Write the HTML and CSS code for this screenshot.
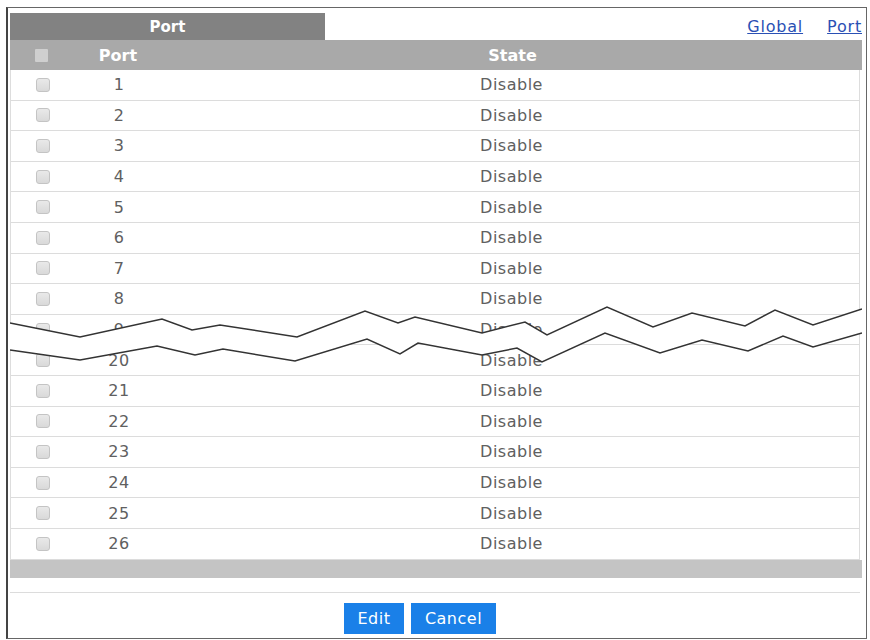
FILE: index.html
```html
<!DOCTYPE html>
<html lang="en">
<head>
  <meta charset="UTF-8" />
  <meta name="viewport" content="width=device-width, initial-scale=1.0" />
  <title>Port Settings</title>
  <link rel="stylesheet" href="styles.css">
</head>
<body>

  <section class="panel">
    <div class="panel-top">
      <div class="tab">Port</div>
      <nav class="links">
        <a href="#">Global</a>
        <a href="#">Port</a>
      </nav>
    </div>

    <div class="port-table">
      <div class="row head">
        <span class="cell"><span class="check all"></span></span>
        <span class="cell">Port</span>
        <span class="cell">State</span>
      </div>

      <div class="row"><span class="cell"><span class="check"></span></span><span class="cell">1</span><span class="cell">Disable</span></div>
      <div class="row"><span class="cell"><span class="check"></span></span><span class="cell">2</span><span class="cell">Disable</span></div>
      <div class="row"><span class="cell"><span class="check"></span></span><span class="cell">3</span><span class="cell">Disable</span></div>
      <div class="row"><span class="cell"><span class="check"></span></span><span class="cell">4</span><span class="cell">Disable</span></div>
      <div class="row"><span class="cell"><span class="check"></span></span><span class="cell">5</span><span class="cell">Disable</span></div>
      <div class="row"><span class="cell"><span class="check"></span></span><span class="cell">6</span><span class="cell">Disable</span></div>
      <div class="row"><span class="cell"><span class="check"></span></span><span class="cell">7</span><span class="cell">Disable</span></div>
      <div class="row"><span class="cell"><span class="check"></span></span><span class="cell">8</span><span class="cell">Disable</span></div>
      <div class="row"><span class="cell"><span class="check"></span></span><span class="cell">9</span><span class="cell">Disable</span></div>
      <div class="row"><span class="cell"><span class="check"></span></span><span class="cell">20</span><span class="cell">Disable</span></div>
      <div class="row"><span class="cell"><span class="check"></span></span><span class="cell">21</span><span class="cell">Disable</span></div>
      <div class="row"><span class="cell"><span class="check"></span></span><span class="cell">22</span><span class="cell">Disable</span></div>
      <div class="row"><span class="cell"><span class="check"></span></span><span class="cell">23</span><span class="cell">Disable</span></div>
      <div class="row"><span class="cell"><span class="check"></span></span><span class="cell">24</span><span class="cell">Disable</span></div>
      <div class="row"><span class="cell"><span class="check"></span></span><span class="cell">25</span><span class="cell">Disable</span></div>
      <div class="row"><span class="cell"><span class="check"></span></span><span class="cell">26</span><span class="cell">Disable</span></div>

      <!-- zig-zag break between port 9 and port 20 -->
      <svg class="cut" viewBox="10 300 852 70" width="852" height="70">
        <polygon fill="#fff" points="10,323 80,337 162,319 192,330 220,325 297,337 365,311 398,323 415,317 482,333 525,322 547,335 607,307 653,327 692,313 745,326 775,310 813,325 862,309 862,333 813,347 783,336 748,351 702,340 660,353 605,333 542,362 517,348 482,355 418,343 400,354 367,339 295,361 223,349 195,355 157,346 80,360 10,350" />
        <polyline fill="none" stroke="#333" stroke-width="1.5" points="10,323 80,337 162,319 192,330 220,325 297,337 365,311 398,323 415,317 482,333 525,322 547,335 607,307 653,327 692,313 745,326 775,310 813,325 862,309" />
        <polyline fill="none" stroke="#333" stroke-width="1.5" points="10,350 80,360 157,346 195,355 223,349 295,361 367,339 400,354 418,343 482,355 517,348 542,362 605,333 660,353 702,340 748,351 783,336 813,347 862,333" />
      </svg>
    </div>

    <div class="table-foot"></div>

    <div class="actions">
      <button class="btn edit">Edit</button>
      <button class="btn cancel">Cancel</button>
    </div>
  </section>

</body>
</html>
```

FILE: styles.css
```css
* {
  box-sizing: border-box;
  font-family: "DejaVu Sans", "Liberation Sans", sans-serif;
}

body {
  margin: 0;
  background: #fff;
  color: #606060;
}

.panel {
  width: 861px;
  height: 632px;
  margin: 7px 0 0 6px;
  padding: 0 4px 4px 2px;
  border: 1px solid #666;
  border-left: 2px solid #444;
  display: flex;
  flex-direction: column;
}

.panel-top {
  display: flex;
  justify-content: space-between;
  align-items: center;
  margin-top: 5px;
  height: 27px;
}

.tab {
  width: 315px;
  height: 27px;
  background: #828282;
  color: #fff;
  font-weight: bold;
  font-size: 15px;
  display: flex;
  align-items: center;
  justify-content: center;
}

.links {
  display: flex;
  gap: 24px;
}

.links a {
  color: #2a50b4;
  font-size: 16px;
  letter-spacing: 0.8px;
  text-decoration: underline;
}

.port-table {
  position: relative;
  border-left: 1px solid #ddd;
  border-right: 1px solid #ddd;
  margin-right: 2px;
}

.row {
  display: grid;
  grid-template-columns: 63px 90px 1fr;
  height: 30.6px;
  border-bottom: 1px solid #dcdcdc;
  align-items: center;
  font-size: 16px;
  letter-spacing: 0.5px;
}

.row .cell {
  text-align: center;
  display: flex;
  justify-content: center;
}

.row.head {
  height: 30px;
  background: #a9a9a9;
  color: #fff;
  font-weight: bold;
  border-bottom: none;
  margin: 0 -3px 0 -1px;
  letter-spacing: 0;
}

.check {
  display: block;
  width: 14px;
  height: 14px;
  border: 1px solid #c4c4c4;
  border-radius: 3px;
  background: linear-gradient(#e9e9e9, #d9d9d9);
}

.check.all {
  width: 13px;
  height: 13px;
  border: none;
  border-radius: 1px;
  background: #cfcfcf;
}

.cut {
  position: absolute;
  top: 260px;
  left: -1px;
}

.table-foot {
  height: 18px;
  background: #c4c4c4;
  border-bottom: 14px solid #fff;
  box-sizing: content-box;
}

.actions {
  border-top: 1px solid #dcdcdc;
  margin-right: 2px;
  padding: 10px 30px 0 0;
  display: flex;
  justify-content: center;
  gap: 7px;
}

.btn {
  height: 31px;
  border: none;
  background: #1a80e8;
  color: #fff;
  font-size: 16px;
  letter-spacing: 0.5px;
  cursor: pointer;
}

.btn.edit {
  width: 60px;
}

.btn.cancel {
  width: 85px;
}
```
